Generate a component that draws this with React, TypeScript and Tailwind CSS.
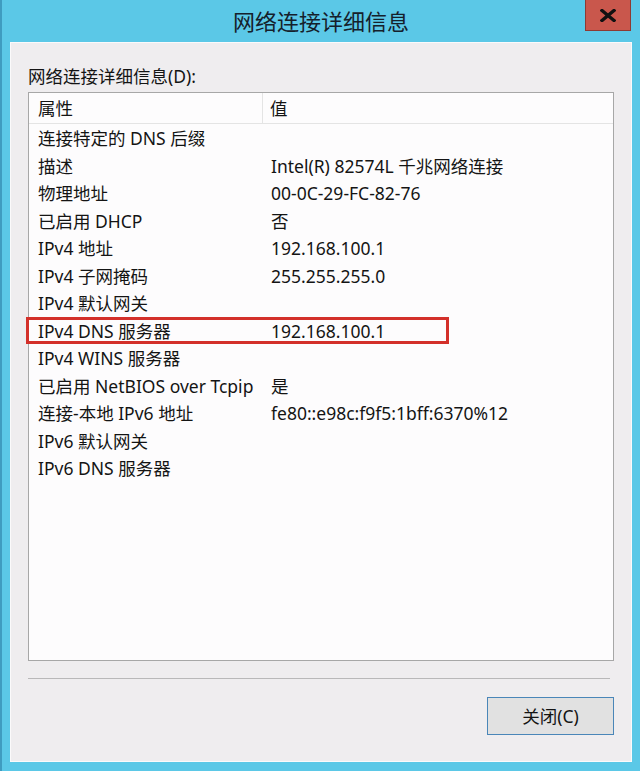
import React from "react";

const rows: { name: string; value?: string; highlight?: boolean }[] = [
  { name: "连接特定的 DNS 后缀" },
  { name: "描述", value: "Intel(R) 82574L 千兆网络连接" },
  { name: "物理地址", value: "00-0C-29-FC-82-76" },
  { name: "已启用 DHCP", value: "否" },
  { name: "IPv4 地址", value: "192.168.100.1" },
  { name: "IPv4 子网掩码", value: "255.255.255.0" },
  { name: "IPv4 默认网关" },
  { name: "IPv4 DNS 服务器", value: "192.168.100.1", highlight: true },
  { name: "IPv4 WINS 服务器" },
  { name: "已启用 NetBIOS over Tcpip", value: "是" },
  { name: "连接-本地 IPv6 地址", value: "fe80::e98c:f9f5:1bff:6370%12" },
  { name: "IPv6 默认网关" },
  { name: "IPv6 DNS 服务器" },
];

const font = "font-['Noto_Sans','Noto_Sans_CJK_SC',sans-serif]";

export default function App() {
  return (
    <div
      className={`w-[640px] h-[771px] bg-[#5bc8e7] border-l-2 border-[#3f9cc0] flex flex-col overflow-hidden ${font} text-[#141414]`}
    >
      {/* title bar */}
      <div className="relative h-[42px] shrink-0 flex items-center justify-center">
        <span className="text-[22px] leading-none text-[#15202b] pb-[1px]">网络连接详细信息</span>
        <div className="absolute right-[9px] top-0 w-[46px] h-[31px] bg-[#c9574c] border border-t-0 border-[#8e3a33] flex items-center justify-center">
          <svg width="16" height="13" viewBox="0 0 16 13">
            <path d="M2 1.5 L14 11.5 M14 1.5 L2 11.5" stroke="#111" strokeWidth="3.4" strokeLinecap="square" />
          </svg>
        </div>
      </div>

      {/* dialog body */}
      <div className="ml-[8px] mr-[8px] mb-[9px] flex-1 bg-[#efedef] border border-[#fbfafb] flex flex-col px-[17px]">
        <div className="pt-[21px] h-[49px] text-[17.5px] leading-[24px]">网络连接详细信息(D):</div>

        <div className="h-[569px] bg-[#fdfcfd] border border-[#a7a7a7] flex flex-col">
          <div className="h-[31px] flex border-b border-[#e4e4e4] text-[17.5px]">
            <div className="w-[234px] pl-[9px] border-r border-[#e4e4e4] flex items-center">属性</div>
            <div className="flex-1 pl-[7px] flex items-center">值</div>
          </div>
          <div className="flex flex-col pt-[1px]">
            {rows.map((r) => (
              <div key={r.name} className="relative h-[27.5px] flex items-center text-[17.5px] leading-none">
                <div className="w-[233px] pl-[9px] whitespace-nowrap">{r.name}</div>
                <div className="pl-[9px] whitespace-nowrap">{r.value ?? ""}</div>
                {r.highlight && (
                  <div className="absolute left-[-3px] top-[-1px] w-[423px] h-[27px] border-[3px] border-[#d3302a]" />
                )}
              </div>
            ))}
          </div>
        </div>

        <div className="mt-[17px] h-[2px] border-t border-[#b9b8b9] border-b-white mr-[4px]" />

        <div className="mt-[17px] flex justify-end">
          <button className="w-[127px] h-[38px] bg-[#e1e1e1] border border-[#4a86b8] text-[17.5px] flex items-center justify-center">
            关闭(C)
          </button>
        </div>
      </div>
    </div>
  );
}
